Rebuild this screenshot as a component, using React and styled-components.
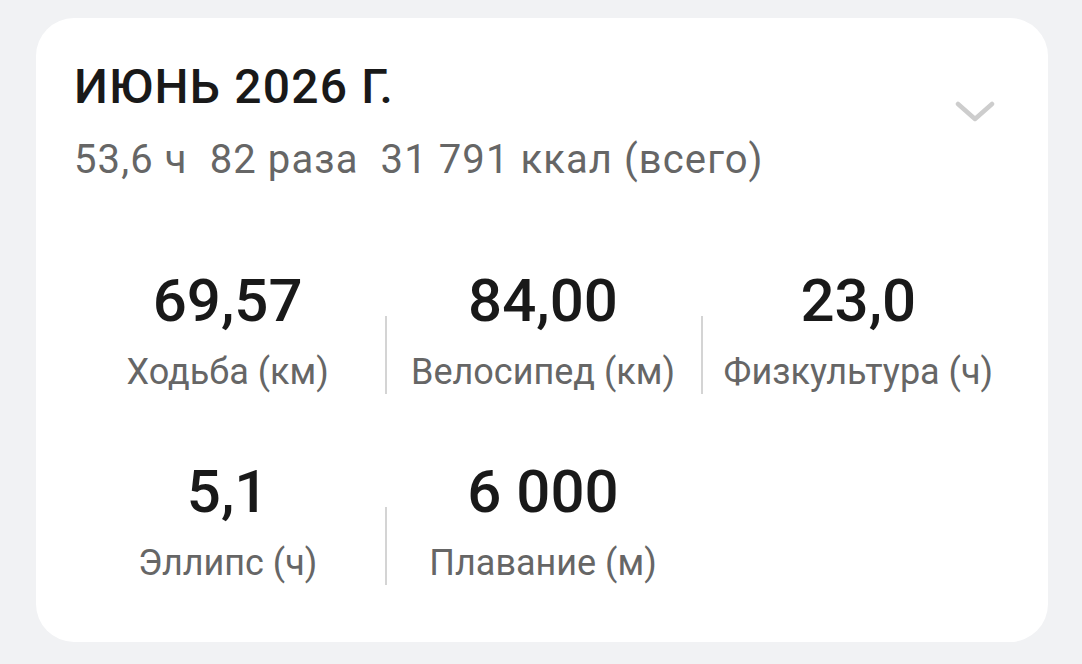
import React from 'react'
import styled, { createGlobalStyle } from 'styled-components'

const GlobalStyle = createGlobalStyle`
    html, body {
        margin: 0;
        padding: 0;
        background-color: #f1f2f4;
        font-family: Roboto, "Noto Sans", sans-serif;
    }
`

const stats = [
    { value: '69,57', label: 'Ходьба (км)' },
    { value: '84,00', label: 'Велосипед (км)' },
    { value: '23,0', label: 'Физкультура (ч)' },
    { value: '5,1', label: 'Эллипс (ч)' },
    { value: '6 000', label: 'Плавание (м)' },
]

function App() {
    return (
        <>
            <GlobalStyle />
            <Page>
                <Card>
                    <Header>
                        <div>
                            <Title>ИЮНЬ 2026 Г.</Title>
                            <Summary>53,6 ч&nbsp;&nbsp;82 раза&nbsp;&nbsp;31 791 ккал (всего)</Summary>
                        </div>
                        <Chevron viewBox="0 0 40 22" aria-hidden="true">
                            <path d="M3 3 L20 18 L37 3" />
                        </Chevron>
                    </Header>
                    <Grid>
                        {stats.map((s, i) => (
                            <Cell key={s.label} $divider={i % 3 !== 0}>
                                <Value>{s.value}</Value>
                                <Label>{s.label}</Label>
                            </Cell>
                        ))}
                    </Grid>
                </Card>
            </Page>
        </>
    )
}

const Page = styled.div`
    padding: 18px 34px 22px 36px;
`

const Card = styled.div`
    background-color: #ffffff;
    border-radius: 38px;
    height: 624px;
    box-sizing: border-box;
    padding: 41px 32px 0 34px;
`

const Header = styled.div`
    display: flex;
    justify-content: space-between;
    align-items: flex-start;
    padding-left: 4px;
`

const Title = styled.div`
    font-size: 48px;
    line-height: 56px;
    font-weight: 500;
    letter-spacing: 1.2px;
    color: #191919;
`

const Summary = styled.div`
    margin-top: 21px;
    font-size: 40px;
    line-height: 48px;
    letter-spacing: 1.1px;
    color: #666666;
    white-space: nowrap;
`

const Chevron = styled.svg`
    width: 40px;
    height: 22px;
    margin-top: 42px;
    margin-right: 21px;
    fill: none;
    stroke: #cdcdcd;
    stroke-width: 4.5;
    stroke-linecap: round;
    stroke-linejoin: round;
`

const Grid = styled.div`
    display: grid;
    grid-template-columns: repeat(3, 1fr);
    row-gap: 63px;
    margin-top: 82px;
`

const Cell = styled.div`
    position: relative;
    display: flex;
    flex-direction: column;
    align-items: center;
    &::before {
        content: '';
        display: ${p => (p.$divider ? 'block' : 'none')};
        position: absolute;
        left: 0;
        top: 50px;
        width: 2px;
        height: 78px;
        background-color: #d4d4d4;
    }
`

const Value = styled.div`
    font-size: 60px;
    line-height: 70px;
    font-weight: 500;
    color: #191919;
`

const Label = styled.div`
    margin-top: 14px;
    font-size: 36px;
    line-height: 44px;
    color: #666666;
    white-space: nowrap;
`

export default App
